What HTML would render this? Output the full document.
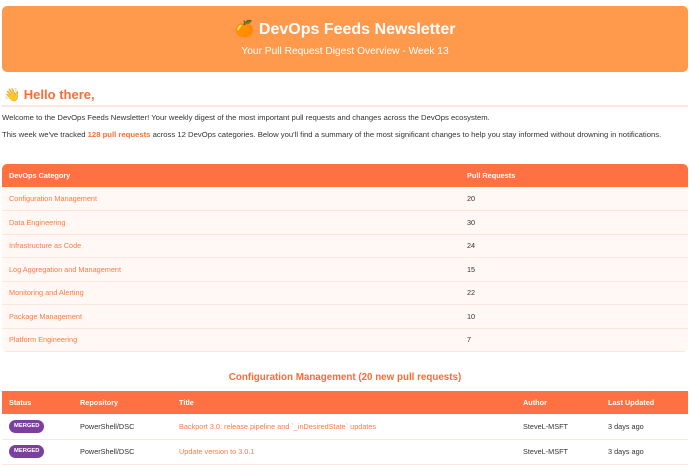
<!DOCTYPE html>
<html><head><meta charset="utf-8"><style>
*{margin:0;padding:0;box-sizing:border-box}
body{width:690px;height:454px;overflow:hidden;background:#fff;font-family:"Liberation Sans",Arial,sans-serif;color:#333;position:relative}
.hdr{position:absolute;left:2px;top:6px;width:686px;height:66px;background:#ff9a4d;border-radius:5px;color:#fff;text-align:center}
.hdr h1{position:absolute;top:14px;width:100%;font-size:16px;line-height:20px;font-weight:bold}
.hdr p{position:absolute;top:39px;width:100%;font-size:10.2px;line-height:13px}
.hello{position:absolute;left:4px;top:87px;font-size:13px;font-weight:bold;color:#ff6b35;line-height:16px}
.hr{position:absolute;left:2px;top:105px;width:686px;height:2px;background:#fde7dc}
.p{position:absolute;left:2px;font-size:7.7px;line-height:10px;color:#333;white-space:nowrap}
.p b{color:#ff6b35}
table{position:absolute;left:2px;width:686px;border-collapse:collapse;font-size:7.3px}
th{background:#ff7043;color:#fff;text-align:left;font-weight:bold;height:23px;padding-left:7px}
td{height:23.5px;padding-left:7px;border-bottom:1px solid #fbe7dd;background:#fff8f4}
td.c{color:#ff7a45}
.t1{top:164px;border-radius:5px;overflow:hidden}
.sec{position:absolute;left:0;width:690px;top:372px;text-align:center;font-size:9.8px;font-weight:bold;color:#ff6b35}
.t2{top:391px}
.t2 td{background:#fff;height:25px}
.m{display:inline-block;background:#7b3fa0;color:#fff;font-size:5.8px;font-weight:bold;border-radius:7px;padding:3px 5px 4px}
</style></head><body>
<div class="hdr"><h1>🍊 DevOps Feeds Newsletter</h1><p>Your Pull Request Digest Overview - Week 13</p></div>
<div class="hello">👋 Hello there,</div>
<div class="hr"></div>
<div class="p" style="top:113px">Welcome to the DevOps Feeds Newsletter! Your weekly digest of the most important pull requests and changes across the DevOps ecosystem.</div>
<div class="p" style="top:130px">This week we've tracked <b>128 pull requests</b> across 12 DevOps categories. Below you'll find a summary of the most significant changes to help you stay informed without drowning in notifications.</div>
<table class="t1">
<tr><th style="width:458px">DevOps Category</th><th>Pull Requests</th></tr>
<tr><td class="c">Configuration Management</td><td>20</td></tr>
<tr><td class="c">Data Engineering</td><td>30</td></tr>
<tr><td class="c">Infrastructure as Code</td><td>24</td></tr>
<tr><td class="c">Log Aggregation and Management</td><td>15</td></tr>
<tr><td class="c">Monitoring and Alerting</td><td>22</td></tr>
<tr><td class="c">Package Management</td><td>10</td></tr>
<tr><td class="c">Platform Engineering</td><td>7</td></tr>
</table>
<div class="sec">Configuration Management (20 new pull requests)</div>
<table class="t2">
<tr><th style="width:71px">Status</th><th style="width:99px">Repository</th><th style="width:344px">Title</th><th style="width:85px">Author</th><th>Last Updated</th></tr>
<tr><td><span class="m">MERGED</span></td><td>PowerShell/DSC</td><td class="c">Backport 3.0: release pipeline and `_inDesiredState` updates</td><td>SteveL-MSFT</td><td>3 days ago</td></tr>
<tr><td><span class="m">MERGED</span></td><td>PowerShell/DSC</td><td class="c">Update version to 3.0.1</td><td>SteveL-MSFT</td><td>3 days ago</td></tr>
</table>
</body></html>
